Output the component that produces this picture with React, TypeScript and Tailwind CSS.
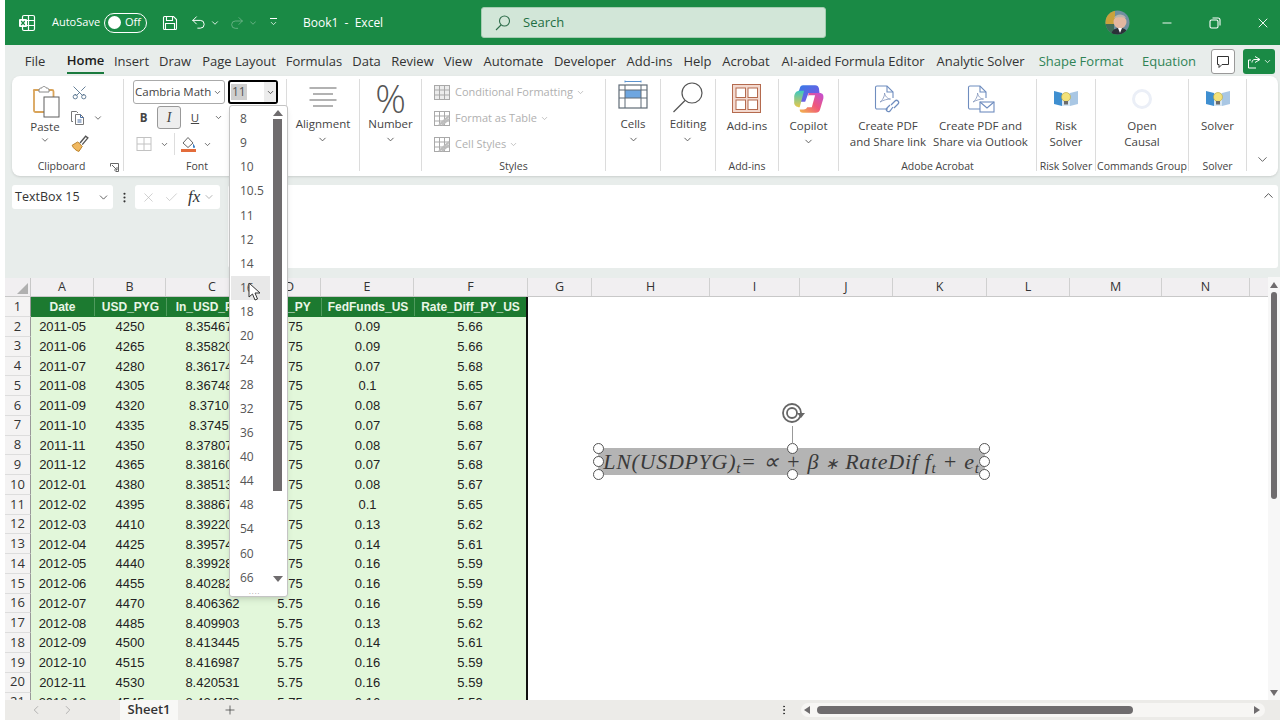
import {
  ChevronDown,
  ChevronLeft,
  ChevronRight,
  ChevronUp,
  Check,
  Minus,
  Plus,
  Scissors,
  Undo2,
  Redo2,
  X,
  MoreVertical,
} from "lucide-react";

const tabs = [
  { name: "File", cls: "w-[20px] ml-[20px]" },
  { name: "Home", cls: "w-[37px] ml-[22px] font-semibold text-[#1c1c1c] border-b-2 border-[#1a7a3e]" },
  { name: "Insert", cls: "w-[33px] ml-[11px]" },
  { name: "Draw", cls: "w-[30px] ml-[12px]" },
  { name: "Page Layout", cls: "w-[72px] ml-[13px]" },
  { name: "Formulas", cls: "w-[54px] ml-[12px]" },
  { name: "Data", cls: "w-[27px] ml-[12px]" },
  { name: "Review", cls: "w-[41px] ml-[12px]" },
  { name: "View", cls: "w-[28px] ml-[11px]" },
  { name: "Automate", cls: "w-[59px] ml-[12px]" },
  { name: "Developer", cls: "w-[60px] ml-[12px]" },
  { name: "Add-ins", cls: "w-[47px] ml-[11px]" },
  { name: "Help", cls: "w-[27px] ml-[11px]" },
  { name: "Acrobat", cls: "w-[46px] ml-[12px]" },
  { name: "AI-aided Formula Editor", cls: "w-[142px] ml-[13px]" },
  { name: "Analytic Solver", cls: "w-[87px] ml-[13px]" },
  { name: "Shape Format", cls: "w-[82px] ml-[16px] text-[#2f8356]" },
  { name: "Equation", cls: "w-[52px] ml-[21px] text-[#2f8356]" },
];

const colHeaders = [
  { name: "A", cls: "w-[63px]" },
  { name: "B", cls: "w-[72px]" },
  { name: "C", cls: "w-[93px]" },
  { name: "D", cls: "w-[62px]" },
  { name: "E", cls: "w-[93px]" },
  { name: "F", cls: "w-[114px]" },
  { name: "G", cls: "w-[64px]" },
  { name: "H", cls: "w-[118px]" },
  { name: "I", cls: "w-[90px]" },
  { name: "J", cls: "w-[93px]" },
  { name: "K", cls: "w-[94px]" },
  { name: "L", cls: "w-[83px]" },
  { name: "M", cls: "w-[92px]" },
  { name: "N", cls: "w-[88px]" },
];

const rows = [
  ["2011-05", "4250", "8.354674", "5.75", "0.09", "5.66"],
  ["2011-06", "4265", "8.358201", "5.75", "0.09", "5.66"],
  ["2011-07", "4280", "8.361742", "5.75", "0.07", "5.68"],
  ["2011-08", "4305", "8.367484", "5.75", "0.1", "5.65"],
  ["2011-09", "4320", "8.37102", "5.75", "0.08", "5.67"],
  ["2011-10", "4335", "8.37455", "5.75", "0.07", "5.68"],
  ["2011-11", "4350", "8.378071", "5.75", "0.08", "5.67"],
  ["2011-12", "4365", "8.381602", "5.75", "0.07", "5.68"],
  ["2012-01", "4380", "8.385133", "5.75", "0.08", "5.67"],
  ["2012-02", "4395", "8.388674", "5.75", "0.1", "5.65"],
  ["2012-03", "4410", "8.392205", "5.75", "0.13", "5.62"],
  ["2012-04", "4425", "8.395746", "5.75", "0.14", "5.61"],
  ["2012-05", "4440", "8.399287", "5.75", "0.16", "5.59"],
  ["2012-06", "4455", "8.402821", "5.75", "0.16", "5.59"],
  ["2012-07", "4470", "8.406362", "5.75", "0.16", "5.59"],
  ["2012-08", "4485", "8.409903", "5.75", "0.13", "5.62"],
  ["2012-09", "4500", "8.413445", "5.75", "0.14", "5.61"],
  ["2012-10", "4515", "8.416987", "5.75", "0.16", "5.59"],
  ["2012-11", "4530", "8.420531", "5.75", "0.16", "5.59"],
  ["2012-12", "4545", "8.424073", "5.75", "0.16", "5.59"],
];

const sizes = ["8", "9", "10", "10.5", "11", "12", "14", "16", "18", "20", "24", "28", "32", "36", "40", "44", "48", "54", "60", "66"];

function ExcelLogo() {
  return (
    <svg width="18" height="18" viewBox="0 0 18 18" fill="none" stroke="white" strokeWidth="1.2">
      <rect x="4.5" y="1.5" width="12" height="15" rx="1.5" />
      <path d="M10.5 1.5v15M4.5 6.5h12M4.5 11.5h12" />
      <rect x="1" y="5" width="8" height="8" rx="1" fill="white" stroke="none" />
      <path d="M3.2 7l3.6 4M6.8 7l-3.6 4" stroke="#1a8a45" />
    </svg>
  );
}

function SaveIcon() {
  return (
    <svg width="16" height="16" viewBox="0 0 16 16" fill="none" stroke="white" strokeWidth="1.1">
      <path d="M1.5 2.5a1 1 0 0 1 1-1h9l3 3v9a1 1 0 0 1-1 1h-11a1 1 0 0 1-1-1z" />
      <path d="M4.5 1.5v4h6v-4M3.5 14.5v-6h9v6" />
    </svg>
  );
}

function PasteIcon() {
  return (
    <svg width="32" height="34" viewBox="0 0 32 34" fill="none">
      <path d="M5 6h18a1.500 1.500 0 0 1 1.500 1.500V28h-18A1.500 1.500 0 0 1 5 26.500V7.500A1.500 1.500 0 0 1 5 6z" stroke="#d9a45a" strokeWidth="1.800" />
      <path d="M10 6c0-2 2-2 3-2 0-2 4-2 4 0 1 0 3 0 3 2v2H10z" fill="white" stroke="#8a8a8a" />
      <rect x="15" y="13" width="15" height="20" fill="white" stroke="#5f5f5f" />
    </svg>
  );
}

function CopyIcon() {
  return (
    <svg width="16" height="16" viewBox="0 0 16 16" fill="none" stroke="#777" strokeWidth="1">
      <path d="M3 11.500h-1.500v-10h5l1.500 1.500" />
      <path d="M5.500 4.500h5l3 3v7h-8z" />
      <path d="M10.500 4.500v3h3M7.500 10h4M7.500 12h4" stroke="#4a6fa5" />
    </svg>
  );
}

function BrushIcon() {
  return (
    <svg width="18" height="18" viewBox="0 0 16 16" fill="none">
      <path d="M1 10l5-3 4 4-3 4.500C5 15 2 13 1 10z" fill="#f0b860" stroke="#b57a20" strokeWidth=".8" />
      <path d="M8 8l5-6 2 1.500-5 6" stroke="#555" strokeWidth="1.200" />
    </svg>
  );
}

function BordersIcon() {
  return (
    <svg width="16" height="16" viewBox="0 0 16 16" fill="none" stroke="#c2c2c2" strokeWidth="1">
      <rect x="1" y="1.500" width="14" height="13" />
      <path d="M8 1.500v13M1 8h14" />
    </svg>
  );
}

function FillIcon() {
  return (
    <svg width="17" height="17" viewBox="0 0 17 17" fill="none">
      <path d="M8 1.500L13 7l-5 4.500L3 7z" stroke="#666" strokeWidth="1" />
      <path d="M13 7.500c1 1.500 2 2.500 2 3.500a1 1 0 0 1-2 0z" fill="#3d7fc4" />
      <rect x="1" y="13" width="15" height="3" fill="#e36c3b" />
    </svg>
  );
}

function StyleIcon({ kind }: { kind: number }) {
  return (
    <svg width="16" height="15" viewBox="0 0 16 15" fill="none" stroke="#a9a9a9" strokeWidth="1">
      <rect x=".5" y=".5" width="15" height="14" fill={kind === 0 ? "#ececec" : "white"} />
      <path d="M.5 5h15M.5 10h15M5.500.5v14M10.500.5v14" />
      {kind > 0 && <path d="M5 14L15 5M8 14l7-6" strokeWidth="2" stroke="#bdbdbd" />}
    </svg>
  );
}

function AlignIcon() {
  return (
    <svg width="30" height="26" viewBox="0 0 30 26" stroke="#666" strokeWidth="1.100">
      <path d="M1.500 3h27M5 9h20M1.500 15h27M5 21h20" />
    </svg>
  );
}

function CellsIcon() {
  return (
    <svg width="30" height="30" viewBox="0 0 30 30" fill="none" className="-mt-[5px]">
      <path d="M7 1.500h16M7 .5v2M23 .5v2" stroke="#5b93cf" />
      <rect x="7" y="10" width="16" height="8" fill="#6ea6e0" />
      <rect x="1" y="5" width="28" height="23" stroke="#5f6b76" strokeWidth="1.200" />
      <path d="M1 10h28M1 18h28M7 5v23M23 5v23" stroke="#5f6b76" />
    </svg>
  );
}

function EditingIcon() {
  return (
    <svg width="32" height="32" viewBox="0 0 32 32" fill="none" stroke="#555" strokeWidth="1.200">
      <circle cx="20" cy="11" r="10" />
      <path d="M13 18.500L1.500 30" />
    </svg>
  );
}

function AddInsIcon() {
  return (
    <svg width="29" height="29" viewBox="0 0 29 29" fill="none">
      <rect x=".5" y=".5" width="28" height="28" fill="#f3d9cf" stroke="#b46a4e" />
      <rect x="4" y="4" width="9.500" height="9.500" fill="white" stroke="#b46a4e" />
      <rect x="16" y="4" width="9.500" height="9.500" fill="white" stroke="#b46a4e" />
      <rect x="4" y="16" width="9.500" height="9.500" fill="white" stroke="#b46a4e" />
      <rect x="16" y="16" width="9.500" height="9.500" fill="white" stroke="#b46a4e" />
    </svg>
  );
}

function CopilotIcon() {
  return (
    <svg width="33" height="33" viewBox="0 0 30 30">
      <defs>
        <linearGradient id="cpA" x1="0" y1="0" x2="1" y2="1">
          <stop offset="0" stopColor="#2f7fe8" />
          <stop offset="1" stopColor="#8a4fe0" />
        </linearGradient>
        <linearGradient id="cpB" x1="0" y1="1" x2="1" y2="0">
          <stop offset="0" stopColor="#f2b84b" />
          <stop offset=".5" stopColor="#f0577a" />
          <stop offset="1" stopColor="#c04fd8" />
        </linearGradient>
        <linearGradient id="cpC" x1="0" y1="0" x2="0" y2="1">
          <stop offset="0" stopColor="#3dc8c0" />
          <stop offset="1" stopColor="#e8c84a" />
        </linearGradient>
      </defs>
      <path d="M10 3h11c2 0 3 1 3.500 3L25 10H15l-3 8H3L7 6c.5-2 1.500-3 3-3z" fill="url(#cpA)" />
      <path d="M2 13c.5-3 2-5 5-5h4l-4 15c-3 0-5.500-2-5-5z" fill="url(#cpC)" />
      <path d="M15 10h10c3 0 4 2 3.500 5l-3 10c-.5 2-2 3-4 3H10c-2 0-3-1-3-3l3.500 0c2 0 3-1 3.500-3z" fill="url(#cpB)" />
      <path d="M15 12h6l-3 11h-6z" fill="white" />
    </svg>
  );
}

function PdfIcon({ mail }: { mail?: boolean }) {
  return (
    <svg width="28" height="30" viewBox="0 0 28 30" fill="none" stroke="#6f8dbf" strokeWidth="1.100">
      <path d="M14 25H3a1.500 1.500 0 0 1-1.500-1.500v-20A1.500 1.500 0 0 1 3 2h10l6 6v6" />
      <path d="M13 2v6h6" />
      <path d="M6 18c2-1 5-6 4.500-9 .5 3 3 6 6 6-3 0-7 1-10.500 3z" stroke="#8a9cc0" strokeWidth=".9" />
      {mail ? (
        <>
          <rect x="13" y="18" width="14" height="10" fill="white" />
          <path d="M13 18l7 6 7-6" />
        </>
      ) : (
        <path d="M17 21l4-4c2-2 5 1 3 3l-4 4M19 23l-3 4c-2 2-5-1-3-3l3-3" strokeWidth="1.200" />
      )}
    </svg>
  );
}

function SolverIcon() {
  return (
    <svg width="26" height="19" viewBox="0 0 26 19">
      <path d="M1 2l8 2v13l-8-2z" fill="#3f8fd0" />
      <path d="M25 2l-8 2v13l8-2z" fill="#a9c7e4" />
      <path d="M9 4h8v13H9z" fill="#d7e6f2" />
      <circle cx="13" cy="8" r="4.500" fill="#f4e27a" stroke="#b9a53a" strokeWidth=".6" />
      <rect x="11" y="12" width="4" height="3.500" fill="#6b6b6b" />
    </svg>
  );
}

function Avatar() {
  return (
    <svg width="25" height="25" viewBox="0 0 25 25">
      <defs>
        <clipPath id="avc">
          <circle cx="12.500" cy="12.500" r="12" />
        </clipPath>
      </defs>
      <g clipPath="url(#avc)">
        <rect width="25" height="25" fill="#6f8fa0" />
        <rect width="10" height="14" fill="#c9a23c" />
        <rect y="14" width="9" height="11" fill="#3f6d58" />
        <circle cx="15" cy="12" r="6.500" fill="#e3b7a0" />
        <path d="M9 8c2-4 9-5 12 0-3-1-9-1-12 0z" fill="#b9b4ac" />
        <path d="M6 25c1-6 5-7 9-7s7 1 8 7z" fill="#2b3138" />
        <path d="M13 18h4l-2 5z" fill="white" />
      </g>
    </svg>
  );
}

function LargeButton({ icon, label, chevron, tall }: { icon: React.ReactNode; label: React.ReactNode; chevron?: boolean; tall?: boolean }) {
  return (
    <div className="flex flex-col items-center">
      <div className={`flex items-center justify-center ${tall ? "h-[39px]" : "h-[37px]"}`}>{icon}</div>
      <div className="text-center leading-[16px] whitespace-nowrap">{label}</div>
      {chevron && <ChevronDown size={11} className="text-[#555] mt-[2px]" />}
    </div>
  );
}

function Group({ cls, label, labelCls, children }: { cls: string; label?: React.ReactNode; labelCls?: string; children?: React.ReactNode }) {
  return (
    <div className={`flex flex-col shrink-0 h-[92px] border-r border-[#dcdcdc] ${cls}`}>
      <div className="h-[79px] shrink-0 flex justify-center">{children}</div>
      <div className={`h-[13px] shrink-0 text-center text-[10.500px] leading-[16px] text-[#444] whitespace-nowrap ${labelCls ?? ""}`}>{label}</div>
    </div>
  );
}

function Handle({ cls }: { cls: string }) {
  return <div className={`absolute w-[11px] h-[11px] rounded-full bg-white border border-[#555] ${cls}`} />;
}

export default function App() {
  return (
    <div className="relative w-[1280px] h-[720px] overflow-hidden bg-white pl-[5px] font-['Open_Sans',sans-serif] text-[#333] flex flex-col">
      {/* title bar */}
      <div className="h-[45px] shrink-0 bg-[#1a8a45] flex items-center text-white text-[12px]">
        <div className="ml-[13px]"><ExcelLogo /></div>
        <span className="ml-[16px] w-[46px] text-[11px]">AutoSave</span>
        <div className="ml-[6px] w-[43px] h-[20px] rounded-full border border-white flex items-center">
          <div className="ml-[3px] w-[13px] h-[13px] rounded-full bg-white" />
          <span className="ml-[4px] text-[11px]">Off</span>
        </div>
        <div className="ml-[15px]"><SaveIcon /></div>
        <Undo2 size={17} strokeWidth={1.4} className="ml-[12px]" />
        <ChevronDown size={10} className="ml-[3px]" />
        <Redo2 size={16} strokeWidth={1.2} className="ml-[9px] opacity-40" />
        <ChevronDown size={10} className="ml-[3px] opacity-40" />
        <div className="ml-[11px] flex flex-col items-center">
          <div className="w-[7px] h-px bg-white mb-[2px]" />
          <ChevronDown size={9} className="-mt-[2px]" />
        </div>
        <span className="ml-[25px] w-[178px] whitespace-pre">Book1  -  Excel</span>
        <div className="w-[345px] h-[31px] bg-[#d2e6d8] rounded-[3px] border border-[#a6cdb2] flex items-center text-[#1f6f44] text-[13px]">
          <svg width="16" height="16" viewBox="0 0 16 16" fill="none" stroke="#2f6d4b" strokeWidth="1.100" className="ml-[13px]">
            <circle cx="9.500" cy="6" r="5" />
            <path d="M6 10l-5 5" />
          </svg>
          <span className="ml-[12px]">Search</span>
        </div>
        <div className="ml-[279px]"><Avatar /></div>
        <Minus size={14} strokeWidth={1.6} className="ml-[30px]" />
        <svg width="12" height="12" viewBox="0 0 12 12" fill="none" stroke="white" strokeWidth="1.100" className="ml-[35px]">
          <rect x="1" y="3" width="8" height="8" rx="1.500" />
          <path d="M3.500 1h5.500a2 2 0 0 1 2 2v5.500" />
        </svg>
        <X size={16} strokeWidth={1.4} className="ml-[34px]" />
      </div>

      {/* tabs and ribbon area */}
      <div className="shrink-0 bg-[#e8edeb] h-[232px] flex flex-col">
        <div className="h-[31px] pt-[2px] flex items-center text-[13px] text-[#333] whitespace-nowrap">
          {tabs.map((t) => (
            <div key={t.name} className={`flex justify-center items-center h-[24px] shrink-0 ${t.cls}`}>{t.name}</div>
          ))}
          <div className="ml-[16px] w-[24px] h-[25px] shrink-0 rounded-[3px] bg-white border border-[#999] flex items-center justify-center">
            <svg width="14" height="14" viewBox="0 0 14 14" fill="none" stroke="#333" strokeWidth="1">
              <path d="M1.500 1.500h11v8h-6.500l-3 3v-3h-1.500z" />
            </svg>
          </div>
          <div className="ml-[8px] w-[32px] h-[25px] shrink-0 rounded-[3px] bg-[#1a8a45] flex items-center justify-center gap-[2px]">
            <svg width="14" height="14" viewBox="0 0 14 14" fill="none" stroke="white" strokeWidth="1">
              <path d="M8 1.500l5 3-5 3M12.500 4.500H8c-2 0-3 1-3 3M9 13H1.500V5H4" />
            </svg>
            <ChevronDown size={9} className="text-white" />
          </div>
        </div>

        {/* ribbon */}
        <div className="ml-[7px] mr-[2px] h-[100px] rounded-lg bg-white shadow-sm flex items-start pt-[3px] text-[11.500px] text-[#444]">
          <Group
            cls="w-[112px] relative"
            labelCls="pr-[12px]"
            label={
              <>
                Clipboard
                <svg width="9" height="9" viewBox="0 0 9 9" fill="none" stroke="#666" className="absolute right-[4px] bottom-[-1px]">
                  <path d="M.5 3.500v-3h8v8h-3M2 2l5 5M4 7h3V4" />
                </svg>
              </>
            }
          >
            <div className="w-full flex pt-[5px]">
              <div className="ml-[15px] flex flex-col items-center w-[36px]">
                <PasteIcon />
                <span className="mt-[1px] leading-[16px]">Paste</span>
                <ChevronDown size={10} className="text-[#555]" />
              </div>
              <div className="ml-[8px] flex flex-col">
                <Scissors size={17} strokeWidth={1.2} className="text-[#4b6a86] -rotate-90" />
                <div className="flex items-center mt-[9px] -ml-[1px]"><CopyIcon /><ChevronDown size={10} className="ml-[7px] text-[#555]" /></div>
                <div className="mt-[8px]"><BrushIcon /></div>
              </div>
            </div>
          </Group>
          <Group cls="w-[163px]" label="Font" labelCls="pr-[16px]">
            <div className="w-full pl-[9px] pt-[1px] flex flex-col">
              <div className="w-[92px] h-[24px] rounded-[3px] border border-[#aaa] flex items-center justify-between pl-[1px] pr-[2px] text-[11.500px] whitespace-nowrap">
                Cambria Math <ChevronDown size={9} />
              </div>
              <div className="flex items-center mt-[2px] h-[23px]">
                <span className="w-[21px] text-center font-bold">B</span>
                <span className="ml-[3px] w-[24px] h-[23px] rounded-[3px] border border-[#999] bg-[#eeeeee] flex items-center justify-center italic font-['Liberation_Serif',serif] text-[14px]">I</span>
                <span className="ml-[2px] w-[24px] text-center underline">U</span>
                <ChevronDown size={9} className="ml-[7px]" />
              </div>
              <div className="flex items-center mt-[4px] ml-[3px]">
                <BordersIcon />
                <ChevronDown size={9} className="ml-[8px]" />
                <div className="w-px h-[22px] bg-[#ddd] ml-[5px]" />
                <div className="ml-[5px]"><FillIcon /></div>
                <ChevronDown size={9} className="ml-[6px]" />
              </div>
            </div>
          </Group>
          <Group cls="w-[73px]">
            <LargeButton icon={<AlignIcon />} label="Alignment" chevron />
          </Group>
          <Group cls="w-[62px]">
            <LargeButton icon={<span className="text-[38px] font-light leading-none text-[#555]">%</span>} label="Number" chevron />
          </Group>
          <Group cls="w-[184px]" label="Styles">
            <div className="w-full pl-[12px] pt-[5px] flex flex-col gap-[10px] text-[11px] leading-[16px] text-[#b0b0b0] whitespace-nowrap">
              <div className="h-[16px] flex items-center gap-[5px]"><StyleIcon kind={0} />Conditional Formatting<ChevronDown size={9} className="-ml-[2px]" /></div>
              <div className="h-[16px] flex items-center gap-[5px]"><StyleIcon kind={1} />Format as Table<ChevronDown size={9} className="-ml-[2px]" /></div>
              <div className="h-[16px] flex items-center gap-[5px]"><StyleIcon kind={2} />Cell Styles<ChevronDown size={9} className="-ml-[2px]" /></div>
            </div>
          </Group>
          <Group cls="w-[55px]">
            <LargeButton icon={<CellsIcon />} label="Cells" chevron />
          </Group>
          <Group cls="w-[55px]">
            <LargeButton icon={<EditingIcon />} label="Editing" chevron />
          </Group>
          <Group cls="w-[63px]" label="Add-ins">
            <LargeButton tall icon={<AddInsIcon />} label="Add-ins" />
          </Group>
          <Group cls="w-[60px]">
            <LargeButton tall icon={<CopilotIcon />} label="Copilot" chevron />
          </Group>
          <Group cls="w-[198px]" label="Adobe Acrobat">
            <div className="flex w-full">
              <div className="ml-[3px] w-[92px]"><LargeButton tall icon={<PdfIcon />} label={<>Create PDF<br />and Share link</>} /></div>
              <div className="w-[93px]"><LargeButton tall icon={<PdfIcon mail />} label={<>Create PDF and<br />Share via Outlook</>} /></div>
            </div>
          </Group>
          <Group cls="w-[59px]" label="Risk Solver">
            <LargeButton tall icon={<SolverIcon />} label={<>Risk<br />Solver</>} />
          </Group>
          <Group cls="w-[93px]" label="Commands Group">
            <LargeButton
              tall
              icon={<div className="w-[20px] h-[20px] rounded-full border-[3px] border-[#ebeff7]" />}
              label={<>Open<br />Causal</>}
            />
          </Group>
          <Group cls="w-[58px]" label="Solver">
            <LargeButton tall icon={<SolverIcon />} label="Solver" />
          </Group>
          <div className="flex-1 h-[88px] flex items-end justify-center">
            <ChevronDown size={15} strokeWidth={1.3} />
          </div>
        </div>

        {/* formula bar */}
        <div className="mt-[9px] ml-[7px] mr-[2px] h-[83px] flex text-[12.500px] text-[#333]">
          <div className="w-[101px] h-[24px] bg-white rounded-[3px] flex items-center justify-between pl-[3px] pr-[3px] whitespace-nowrap">
            TextBox 15 <ChevronDown size={13} strokeWidth={1.4} />
          </div>
          <MoreVertical size={13} className="ml-[5px] mt-[6px]" />
          <div className="ml-[4px] w-[85px] h-[24px] bg-white rounded-[3px] flex items-center pl-[6px] text-[#b5b5b5]">
            <X size={15} strokeWidth={1} />
            <Check size={15} strokeWidth={1} className="ml-[8px]" />
            <span className="ml-[9px] font-['Liberation_Serif',serif] italic text-[17px] text-[#333]">fx</span>
            <ChevronDown size={12} className="ml-[3px]" />
          </div>
          <div className="ml-[8px] flex-1 h-[83px] bg-white rounded-[3px] flex justify-end items-start p-[3px] pr-[2px]">
            <ChevronUp size={15} strokeWidth={1.3} />
          </div>
        </div>
      </div>

      {/* sheet */}
      <div className="h-[423px] shrink-0 mt-0 flex overflow-hidden">
        <div className="flex-1 flex flex-col overflow-hidden border-t-[1px] border-[#e8edeb]">
          <div className="h-[19px] shrink-0 flex bg-[#f1eff1] border-b border-[#c8c8c8] text-[12.500px] text-[#333]">
            <div className="w-[26px] shrink-0 flex items-end justify-end pr-[2px] pb-[2px] border-r border-[#c8c8c8]">
              <div className="w-0 h-0 border-l-[11px] border-l-transparent border-b-[11px] border-b-[#b0b0b0]" />
            </div>
            {colHeaders.map((c) => (
              <div key={c.name} className={`shrink-0 flex items-center justify-center border-r border-[#d0d0d0] ${c.cls}`}>{c.name}</div>
            ))}
          </div>
          <div className="h-[20px] shrink-0 flex font-['Liberation_Sans',sans-serif] text-[12px] font-bold text-[#e9f6e6]">
            <div className="w-[26px] shrink-0 flex items-center justify-center bg-[#f4f3f3] border-r border-[#999] border-b border-b-[#ddd] font-normal text-[13px] font-['Open_Sans',sans-serif] text-[#333]">1</div>
            <div className="flex w-[497px] shrink-0 bg-[#1c7a30] border-r-2 border-[#111] text-center">
              <span className="w-[63px] self-center">Date</span>
              <span className="w-[72px] self-center border-l border-[#4f9a5d]">USD_PYG</span>
              <span className="w-[93px] self-center border-l border-[#4f9a5d]">ln_USD_PYG</span>
              <span className="w-[62px] self-center">Pol_PY</span>
              <span className="w-[93px] self-center border-l border-[#4f9a5d]">FedFunds_US</span>
              <span className="w-[112px] self-center border-l border-[#4f9a5d]">Rate_Diff_PY_US</span>
            </div>
          </div>
          {rows.map((r, i) => (
            <div key={r[0]} className="h-[19.780px] shrink-0 flex font-['Liberation_Sans',sans-serif] text-[13px] text-[#222]">
              <div className="w-[26px] shrink-0 flex items-center justify-center bg-[#f4f3f3] border-r border-[#999] border-b border-b-[#ddd] font-['Open_Sans',sans-serif] text-[#333]">{i + 2}</div>
              <div className="flex w-[497px] shrink-0 items-center bg-[#e2f7da] border-r-2 border-[#111] text-center">
                {r.map((v, j) => (
                  <span
                    key={j}
                    className={
                      j === 0 ? "w-[63px]" : j === 1 ? "w-[72px]" : j === 2 ? "w-[93px]" : j === 3 ? "w-[62px]" : j === 4 ? "w-[93px]" : "w-[112px]"
                    }
                  >
                    {v}
                  </span>
                ))}
              </div>
            </div>
          ))}
        </div>

        {/* vertical scrollbar */}
        <div className="w-[12px] shrink-0 bg-[#f7f7f7] flex flex-col items-center pt-[5px] pb-[4px]">
          <div className="w-0 h-0 border-x-[4px] border-x-transparent border-b-[6px] border-b-[#6f6c6e]" />
          <div className="mt-[4px] w-[6px] h-[207px] rounded-full bg-[#6f6c6e]" />
          <div className="flex-1" />
          <div className="w-0 h-0 border-x-[4px] border-x-transparent border-t-[6px] border-t-[#6f6c6e]" />
        </div>
      </div>

      {/* sheet tabs */}
      <div className="h-[20px] shrink-0 bg-[#ecebe8] flex items-center text-[13px] text-[#333]">
        <ChevronLeft size={14} strokeWidth={1.2} className="ml-[24px] text-[#999]" />
        <ChevronRight size={14} strokeWidth={1.2} className="ml-[18px] text-[#999]" />
        <div className="ml-[45px] w-[58px] h-[20px] bg-[#f8f8f6] font-semibold flex items-center justify-center">Sheet1</div>
        <Plus size={14} strokeWidth={1.2} className="ml-[45px]" />
        <MoreVertical size={12} className="ml-[541px]" />
        <div className="ml-[11px] w-[464px] h-[14px] rounded-full bg-[#f7f6f4] flex items-center">
          <div className="ml-[3px] w-0 h-0 border-y-[4px] border-y-transparent border-r-[6px] border-r-[#6f6c6e]" />
          <div className="ml-[7px] w-[316px] h-[8px] rounded-full bg-[#6f6c6e]" />
          <div className="ml-[121px] w-0 h-0 border-y-[4px] border-y-transparent border-l-[6px] border-l-[#6f6c6e]" />
        </div>
      </div>

      {/* font size box + dropdown */}
      <div className="absolute left-[228px] top-[80px] w-[50px] h-[24px] bg-white rounded-[3px] border-2 border-black flex items-center justify-between text-[12px]">
        <span className="ml-[1px] bg-[#cfcfcf] px-[1px] leading-[16px] text-[#555]">11</span>
        <span className="h-full w-[12px] bg-[#ececec] flex items-center justify-center"><ChevronDown size={9} /></span>
      </div>
      <div className="absolute left-[229px] top-[105px] w-[59px] h-[492px] bg-white rounded-[3px] border border-[#c4c4c4] shadow-md flex text-[12px] text-[#555]">
        <div className="w-[40px] pt-[1px] pl-[1px] flex flex-col">
          {sizes.map((s) => (
            <div key={s} className={`h-[24.150px] shrink-0 pl-[9px] flex items-center ${s === "16" ? "bg-[#e8e8e8]" : ""}`}>{s}</div>
          ))}
        </div>
        <div className="ml-[3px] w-[9px] flex flex-col items-center pt-[4px]">
          <div className="w-0 h-0 border-x-[5px] border-x-transparent border-b-[6px] border-b-[#6f6c6e]" />
          <div className="mt-[3px] w-[9px] h-[372px] bg-[#6f6c6e]" />
          <div className="mt-[85px] w-0 h-0 border-x-[5px] border-x-transparent border-t-[6px] border-t-[#6f6c6e]" />
        </div>
        <div className="absolute bottom-[1px] left-[19px] text-[7px] leading-[7px] tracking-[1px] text-[#999]">....</div>
      </div>
      {/* mouse pointer */}
      <svg width="14" height="19" viewBox="0 0 14 19" className="absolute left-[248px] top-[282px]">
        <path d="M1 1v14l3.500-3 2.500 6 2.500-1-2.500-6h5z" fill="white" stroke="#333" strokeWidth="1" />
      </svg>

      {/* equation text box */}
      <div className="absolute left-[598px] top-[448px] w-[387px] h-[27px] bg-[#b4b4b4] flex items-center justify-center font-['Liberation_Serif',serif] italic text-[#3a3a3a] text-[22px] whitespace-nowrap">
        <span className="tracking-[0.7px]">
          LN(USDPYG)<sub className="text-[15px]">t</sub>= ∝ + β <span className="text-[16px]">∗</span> RateDif f<sub className="text-[15px]">t</sub> + e<sub className="text-[15px]">t</sub>
        </span>
        <Handle cls="-left-[5px] -top-[5px]" />
        <Handle cls="-left-[5px] top-[8px]" />
        <Handle cls="-left-[5px] -bottom-[5px]" />
        <Handle cls="left-[189px] -top-[5px]" />
        <Handle cls="left-[189px] -bottom-[5px]" />
        <Handle cls="-right-[5px] -top-[5px]" />
        <Handle cls="-right-[5px] top-[8px]" />
        <Handle cls="-right-[5px] -bottom-[5px]" />
        <div className="absolute left-[194px] -top-[22px] w-px h-[18px] bg-[#999]" />
        <svg width="26" height="26" viewBox="0 0 26 26" fill="none" className="absolute left-[183px] -top-[47px]">
          <circle cx="11" cy="12" r="9" stroke="#666" strokeWidth="1.800" />
          <circle cx="11" cy="12" r="5" stroke="#666" strokeWidth="1.800" />
          <path d="M16 12l4 5 4-5z" fill="#666" />
        </svg>
      </div>
    </div>
  );
}
